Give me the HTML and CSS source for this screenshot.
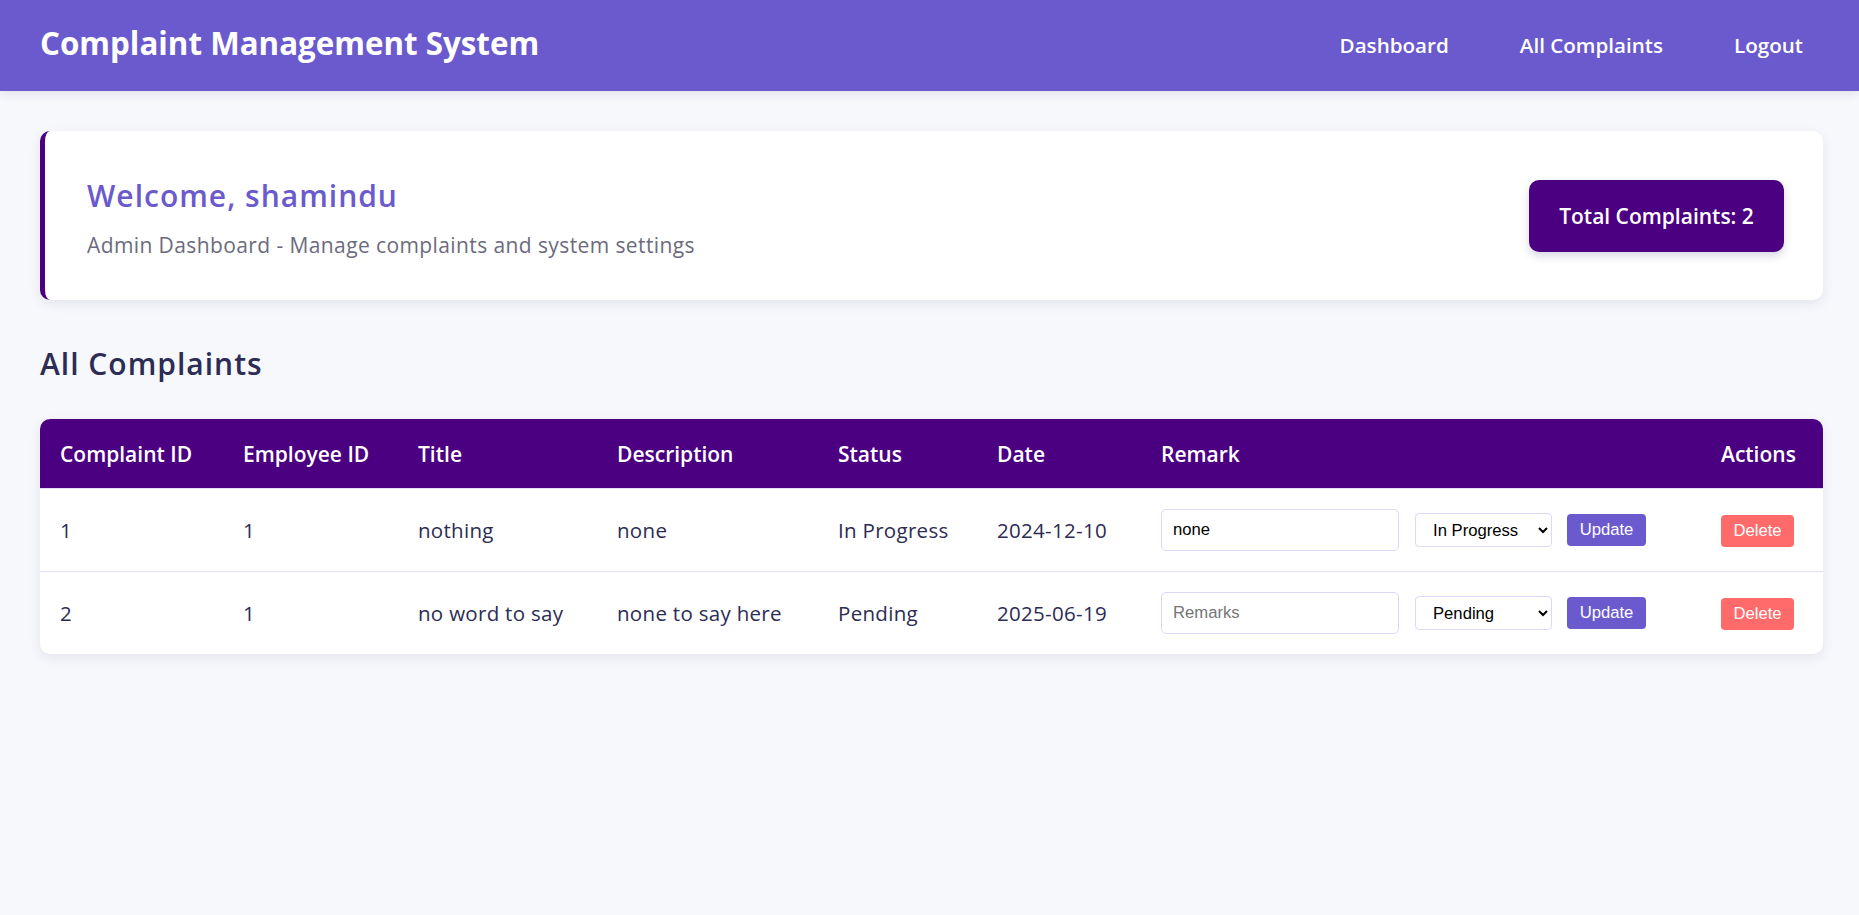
FILE: index.html
```html
<!DOCTYPE html>
<html lang="en">
<head>
<meta charset="utf-8">
<title>Complaint Management System</title>
<link rel="stylesheet" href="styles.css">
</head>
<body>
<nav class="navbar">
  <div class="brand">Complaint Management System</div>
  <div class="nav-links">
    <a href="#" class="nav-link">Dashboard</a>
    <a href="#" class="nav-link">All Complaints</a>
    <a href="#" class="nav-link">Logout</a>
  </div>
</nav>
<main class="container">
  <section class="welcome-card">
    <div class="welcome-text">
      <h1 class="welcome-title">Welcome, shamindu</h1>
      <p class="welcome-sub">Admin Dashboard - Manage complaints and system settings</p>
    </div>
    <div class="total-badge">Total Complaints: 2</div>
  </section>

  <h2 class="section-title">All Complaints</h2>

  <div class="table-wrap">
    <table class="complaints">
      <colgroup>
        <col class="c-id"><col class="c-emp"><col class="c-title"><col class="c-desc">
        <col class="c-status"><col class="c-date"><col class="c-remark"><col class="c-actions">
      </colgroup>
      <thead>
        <tr>
          <th>Complaint ID</th>
          <th>Employee ID</th>
          <th>Title</th>
          <th>Description</th>
          <th>Status</th>
          <th>Date</th>
          <th>Remark</th>
          <th>Actions</th>
        </tr>
      </thead>
      <tbody>
        <tr>
          <td>1</td>
          <td>1</td>
          <td>nothing</td>
          <td>none</td>
          <td>In Progress</td>
          <td>2024-12-10</td>
          <td>
            <div class="remark-form">
              <input class="remark-input" type="text" value="none" placeholder="Remarks">
              <select class="status-select">
                <option>Pending</option>
                <option selected>In Progress</option>
                <option>Resolved</option>
              </select>
              <button class="btn btn-update">Update</button>
            </div>
          </td>
          <td><button class="btn btn-delete">Delete</button></td>
        </tr>
        <tr>
          <td>2</td>
          <td>1</td>
          <td>no word to say</td>
          <td>none to say here</td>
          <td>Pending</td>
          <td>2025-06-19</td>
          <td>
            <div class="remark-form">
              <input class="remark-input" type="text" placeholder="Remarks">
              <select class="status-select">
                <option selected>Pending</option>
                <option>In Progress</option>
                <option>Resolved</option>
              </select>
              <button class="btn btn-update">Update</button>
            </div>
          </td>
          <td><button class="btn btn-delete">Delete</button></td>
        </tr>
      </tbody>
    </table>
  </div>
</main>
</body>
</html>
```
FILE: styles.css
```css
* { box-sizing: border-box; }

body {
  margin: 0;
  background: #f7f8fc;
  font-family: "Open Sans", "Noto Sans", sans-serif;
  color: #2c2c54;
}

.navbar {
  height: 91px;
  background: #6a5acd;
  display: flex;
  align-items: center;
  justify-content: space-between;
  padding: 0 36px 0 40px;
  box-shadow: 0 2px 10px rgba(40, 30, 90, 0.12);
}

.brand {
  color: #fff;
  font-size: 31.3px;
  font-weight: 700;
  line-height: 1;
  margin-top: -3px;
}

.nav-links {
  display: flex;
  gap: 31px;
}

.nav-link {
  color: #fff;
  text-decoration: none;
  font-size: 20.6px;
  font-weight: 600;
  padding: 10px 20px;
  margin-top: -2px;
}

.container {
  padding: 40px 36px 40px 40px;
}

.welcome-card {
  height: 169px;
  background: #fff;
  border-left: 5px solid #4b0082;
  border-radius: 10px;
  box-shadow: 0 4px 12px rgba(40, 30, 90, 0.09);
  padding: 0 39px 0 42px;
  display: flex;
  align-items: center;
  justify-content: space-between;
}

.welcome-text {
  padding-top: 7px;
}

.welcome-title {
  margin: 0;
  color: #6a5acd;
  font-size: 30px;
  font-weight: 600;
  letter-spacing: 1px;
  line-height: 34px;
}

.welcome-sub {
  margin: 17px 0 0;
  color: #6b6b7d;
  font-size: 21px;
  letter-spacing: 0.4px;
  line-height: 30px;
}

.total-badge {
  width: 255px;
  height: 72px;
  display: flex;
  align-items: center;
  justify-content: center;
  background: #4b0082;
  color: #fff;
  border-radius: 10px;
  font-size: 21px;
  font-weight: 600;
  box-shadow: 0 4px 10px rgba(40, 30, 90, 0.18);
}

.section-title {
  margin: 47px 0 38px;
  font-size: 30px;
  font-weight: 600;
  letter-spacing: 1px;
  line-height: 34px;
  color: #2c2c54;
}

.table-wrap {
  background: #fff;
  border-radius: 10px;
  overflow: hidden;
  box-shadow: 0 4px 12px rgba(40, 30, 90, 0.09);
}

.complaints {
  width: 100%;
  border-collapse: collapse;
  table-layout: fixed;
}

.c-id { width: 183px; }
.c-emp { width: 175px; }
.c-title { width: 199px; }
.c-desc { width: 221px; }
.c-status { width: 159px; }
.c-date { width: 164px; }
.c-remark { width: 560px; }
.c-actions { width: 122px; }

.complaints th {
  background: #4b0082;
  color: #fff;
  text-align: left;
  font-size: 21px;
  font-weight: 600;
  line-height: 30px;
  padding: 20px 20px 19px;
  border-bottom: 1px solid #e2defa;
  white-space: nowrap;
}

.complaints td {
  font-size: 20.5px;
  letter-spacing: 0.3px;
  line-height: 30px;
  padding: 20px;
  color: #2c2c54;
  vertical-align: middle;
  white-space: nowrap;
  border-bottom: 1px solid #e2defa;
}

.complaints tbody tr:last-child td { border-bottom: none; }

.remark-form {
  display: flex;
  align-items: center;
}

.remark-input {
  width: 238px;
  height: 42px;
  padding: 0 11px;
  border: 1px solid #ddd8f8;
  border-radius: 5px;
  font-family: "Liberation Sans", Arial, sans-serif;
  font-size: 16.67px;
  letter-spacing: 0;
  color: #000;
  background: #fff;
  outline: none;
}

.remark-input::placeholder { color: #757575; }

.status-select {
  width: 137px;
  height: 34px;
  margin-left: 16px;
  padding: 0 6px 0 13px;
  border: 1px solid #ddd8f8;
  border-radius: 4px;
  background: #fff;
  font-family: "Liberation Sans", Arial, sans-serif;
  font-size: 16.67px;
  letter-spacing: 0;
  color: #000;
}

.btn {
  height: 32px;
  border: none;
  border-radius: 4px;
  color: #fff;
  font-family: "Liberation Sans", Arial, sans-serif;
  font-size: 16.67px;
  letter-spacing: 0;
  padding: 0 12px;
  cursor: pointer;
}

.btn-update {
  width: 79px;
  margin-left: 15px;
  background: #6a5acd;
}

.btn-delete {
  width: 73px;
  background: #ff6b6b;
}
```
